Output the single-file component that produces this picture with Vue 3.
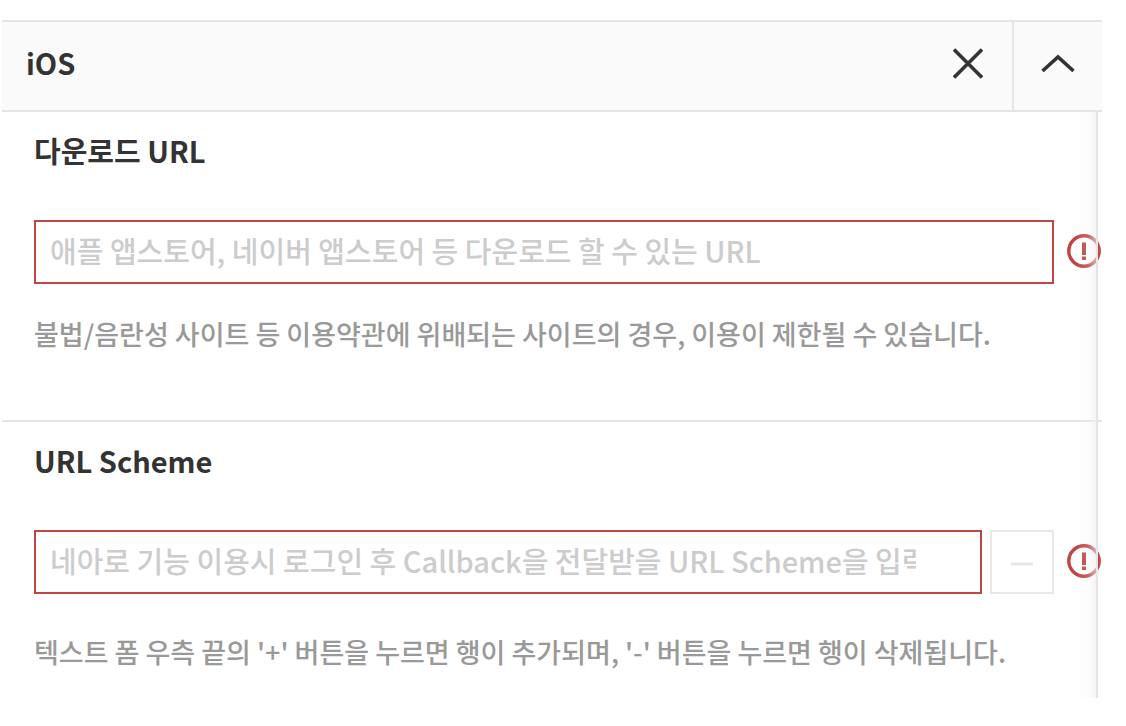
<script setup>
import { ref } from 'vue'

const downloadUrl = ref('')
const scheme = ref('')
</script>

<template>
  <main class="panel">
    <header class="head">
      <h1 class="name">iOS</h1>
      <button class="tool close" type="button" aria-label="삭제">
        <svg width="36" height="36" viewBox="0 0 36 36" aria-hidden="true">
          <path d="M4 4.500 32 32.500M32 4.500 4 32.500" />
        </svg>
      </button>
      <button class="tool fold" type="button" aria-label="접기">
        <svg width="36" height="36" viewBox="0 0 36 36" aria-hidden="true">
          <path d="M2.5 26 18 12 33.500 26" />
        </svg>
      </button>
    </header>

    <div class="body">
      <section class="group">
        <label class="title" for="download-url">다운로드 URL</label>
        <div class="row">
          <input
            id="download-url"
            v-model="downloadUrl"
            class="field"
            type="text"
            placeholder="애플 앱스토어, 네이버 앱스토어 등 다운로드 할 수 있는 URL"
            aria-describedby="download-help"
            aria-invalid="true"
          />
          <svg class="alert" width="34" height="34" viewBox="0 0 34 34" aria-hidden="true">
            <circle cx="17" cy="17" r="15.2" />
            <path d="M15 8.500h4v12.500h-4zM15 22.500h4v3.500h-4z" />
          </svg>
        </div>
        <p id="download-help" class="help">불법/음란성 사이트 등 이용약관에 위배되는 사이트의 경우, 이용이 제한될 수 있습니다.</p>
      </section>

      <section class="group scheme">
        <label class="title" for="url-scheme">URL Scheme</label>
        <div class="row">
          <input
            id="url-scheme"
            v-model="scheme"
            class="field"
            type="text"
            placeholder="네아로 기능 이용시 로그인 후 Callback을 전달받을 URL Scheme을 입력해주세요"
            aria-describedby="scheme-help"
            aria-invalid="true"
          />
          <button class="minus" type="button" aria-label="행 삭제" disabled>
            <svg width="24" height="4" viewBox="0 0 24 4" aria-hidden="true">
              <path d="M1 2h22" />
            </svg>
          </button>
          <svg class="alert" width="34" height="34" viewBox="0 0 34 34" aria-hidden="true">
            <circle cx="17" cy="17" r="15.2" />
            <path d="M15 8.500h4v12.500h-4zM15 22.500h4v3.500h-4z" />
          </svg>
        </div>
        <p id="scheme-help" class="help">텍스트 폼 우측 끝의 '+' 버튼을 누르면 행이 추가되며, '-' 버튼을 누르면 행이 삭제됩니다.</p>
      </section>
    </div>
  </main>
</template>

<style>
body {
  background: #fff;
}
</style>

<style scoped>
.panel {
  margin: 20px 24px 0 2px;
  color: #333;
  font-family: "Noto Sans CJK KR", sans-serif;
}

.panel * {
  box-sizing: border-box;
}

.head {
  display: flex;
  height: 92px;
  border-top: 2px solid #e5e5e7;
  border-bottom: 2px solid #e5e5e7;
  background: #fafafa;
}

.name {
  flex: 1;
  margin: 0;
  padding-left: 24px;
  font-size: 29px;
  font-weight: 700;
  line-height: 80px;
}

.tool {
  display: flex;
  align-items: center;
  justify-content: center;
  width: 90px;
  padding: 0 0 6px;
  border: 0;
  background: none;
}

.close {
  width: 88px;
}

.fold {
  border-left: 2px solid #e5e5e7;
}

.tool path {
  fill: none;
  stroke: #333;
  stroke-width: 3.6;
}

.body {
  position: relative;
}

.body::after {
  content: "";
  position: absolute;
  top: 0;
  right: 4px;
  bottom: 0;
  width: 18px;
  border-right: 2px solid #e5e5e7;
  background: linear-gradient(to right, rgba(240, 240, 242, 0.05), rgba(240, 240, 242, 0.15) 55%, rgba(238, 238, 240, 0.6));
  pointer-events: none;
}

.group {
  padding: 18px 0 66px 32px;
  border-bottom: 2px solid #e5e5e7;
}

.scheme {
  padding-bottom: 26px;
  border-bottom: 0;
}

.title {
  display: block;
  font-size: 29px;
  font-weight: 700;
  line-height: 40px;
}

.row {
  display: flex;
  align-items: center;
  gap: 8px;
  margin-top: 50px;
}

.field {
  flex: 1;
  min-width: 0;
  height: 64px;
  padding: 0 64px 4px 14px;
  border: 2px solid #c14543;
  border-radius: 0;
  outline: 0;
  background: #fff;
  color: #333;
  font: 500 29px "Noto Sans CJK KR", sans-serif;
}

.field::placeholder {
  color: #ccc;
  opacity: 1;
}

.minus {
  display: flex;
  align-items: center;
  justify-content: center;
  width: 64px;
  height: 64px;
  padding: 4px 0 0;
  border: 2px solid #e8e8e8;
  background: #fff;
}

.minus path {
  stroke: #e8e8e8;
  stroke-width: 3;
}

.alert {
  flex: none;
  margin: 0 1px 2px 5px;
}

.alert circle {
  fill: #fff;
  stroke: #c14543;
  stroke-width: 3.4;
}

.alert path {
  fill: #c14543;
}

.help {
  margin: 30px 0 0;
  color: #999;
  font-size: 27px;
  font-weight: 500;
  line-height: 40px;
  white-space: nowrap;
}

.scheme .help {
  margin-top: 38px;
}
</style>
